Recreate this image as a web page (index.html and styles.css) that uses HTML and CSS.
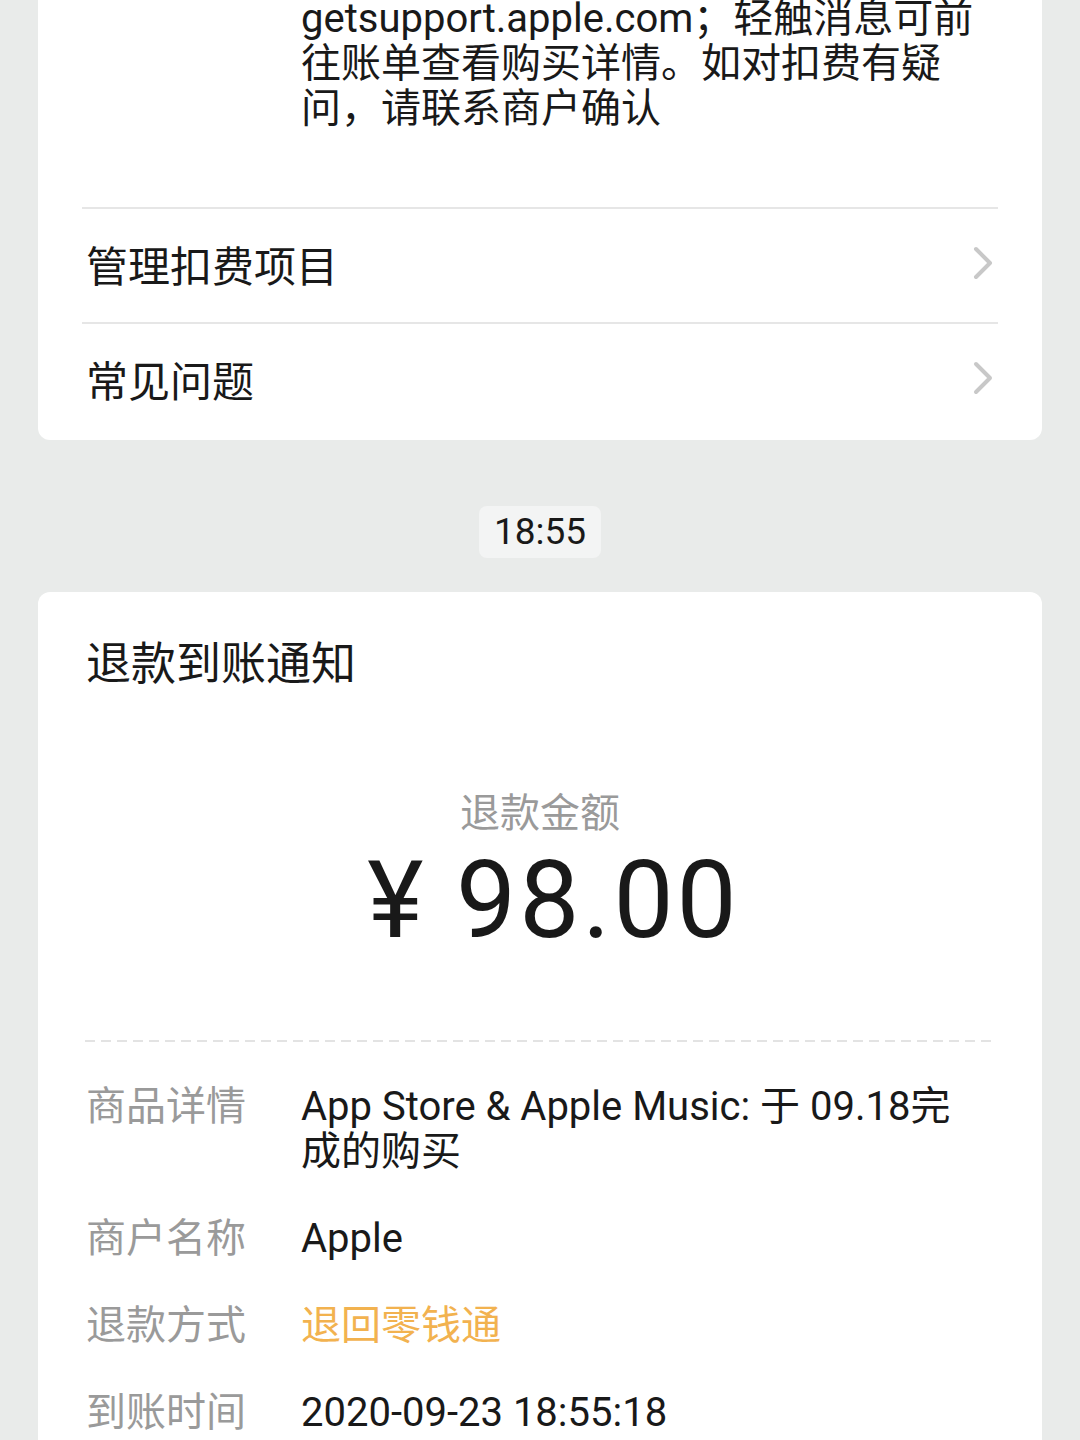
FILE: index.html
```html
<!DOCTYPE html>
<html lang="zh-CN">
<head>
    <meta charset="UTF-8">
    <meta name="viewport" content="width=device-width, initial-scale=1.0">
    <title>微信支付</title>
    <link rel="stylesheet" href="styles.css">
</head>
<body>
    <div class="card card-top">
        <div class="info-row info-row-first">
            <div class="info-label"></div>
            <div class="info-value">getsupport.apple.com；轻触消息可前往账单查看购买详情。如对扣费有疑问，请联系商户确认</div>
        </div>
        <a class="menu-item" href="#">
            <span>管理扣费项目</span>
            <svg class="chevron" width="20" height="34" viewBox="0 0 20 34"><polyline points="3,3 17,17 3,31" fill="none" stroke="#c8c8c8" stroke-width="4" stroke-linecap="round" stroke-linejoin="round"/></svg>
        </a>
        <a class="menu-item" href="#">
            <span>常见问题</span>
            <svg class="chevron" width="20" height="34" viewBox="0 0 20 34"><polyline points="3,3 17,17 3,31" fill="none" stroke="#c8c8c8" stroke-width="4" stroke-linecap="round" stroke-linejoin="round"/></svg>
        </a>
    </div>

    <div class="time-tag">18:55</div>

    <div class="card">
        <h2 class="card-title">退款到账通知</h2>
        <div class="amount">
            <div class="amount-label">退款金额</div>
            <div class="amount-value">¥ 98.00</div>
        </div>
        <div class="dash-line"></div>
        <div class="info-list">
            <div class="info-row">
                <div class="info-label">商品详情</div>
                <div class="info-value">App Store &amp; Apple Music: 于 09.18完成的购买</div>
            </div>
            <div class="info-row">
                <div class="info-label">商户名称</div>
                <div class="info-value">Apple</div>
            </div>
            <div class="info-row">
                <div class="info-label">退款方式</div>
                <div class="info-value info-orange">退回零钱通</div>
            </div>
            <div class="info-row">
                <div class="info-label">到账时间</div>
                <div class="info-value">2020-09-23 18:55:18</div>
            </div>
        </div>
    </div>
</body>
</html>
```

FILE: styles.css
```css
body {
    font-family: Roboto, "Noto Sans CJK SC", sans-serif;
    background-color: #e9ebea;
    color: #191919;
    margin: 0;
    padding: 0;
}
.card {
    background-color: #fff;
    margin: 0 38px;
    padding: 0 44px;
    border-radius: 12px;
}
.card-top {
    margin-top: -4px;
    padding-bottom: 3px;
    border-radius: 0 0 12px 12px;
}
.info-row {
    display: flex;
    font-size: 40px;
    line-height: 45px;
    margin-top: 42px;
}
.info-row-first {
    margin-top: 0;
    padding-bottom: 76px;
}
.info-label {
    width: 215px;
    flex-shrink: 0;
    padding-left: 4px;
    color: #9a9a9a;
}
.info-value {
    flex: 1;
    padding-right: 13px;
}
.info-orange {
    color: #f2b24f;
}
.menu-item {
    display: flex;
    justify-content: space-between;
    align-items: center;
    height: 113px;
    padding: 0 5px 0 4px;
    border-top: 2px solid #e6e6e6;
    font-size: 42px;
    color: #191919;
    text-decoration: none;
}
.menu-item span {
    margin-top: -4px;
}
.chevron {
    margin-top: -6px;
}
.time-tag {
    width: fit-content;
    margin: 66px auto 34px;
    height: 52px;
    line-height: 52px;
    padding: 0 15px;
    background-color: #f3f4f4;
    border-radius: 8px;
    font-size: 37px;
}
.card-title {
    margin: 0;
    padding: 48px 0 0 4px;
    font-size: 45px;
    line-height: 50px;
    font-weight: normal;
}
.amount {
    margin-top: 101px;
    text-align: center;
}
.amount-label {
    font-size: 40px;
    line-height: 45px;
    color: #9a9a9a;
}
.amount-value {
    margin-top: 10px;
    font-size: 107px;
    line-height: 110px;
    letter-spacing: 3px;
    padding-left: 27px;
}
.dash-line {
    margin: 84px 1px 0 3px;
    height: 2px;
    background: repeating-linear-gradient(to right, #e3e3e3 0 10px, transparent 10px 16px);
}
.info-list {
    padding-bottom: 40px;
}
```
